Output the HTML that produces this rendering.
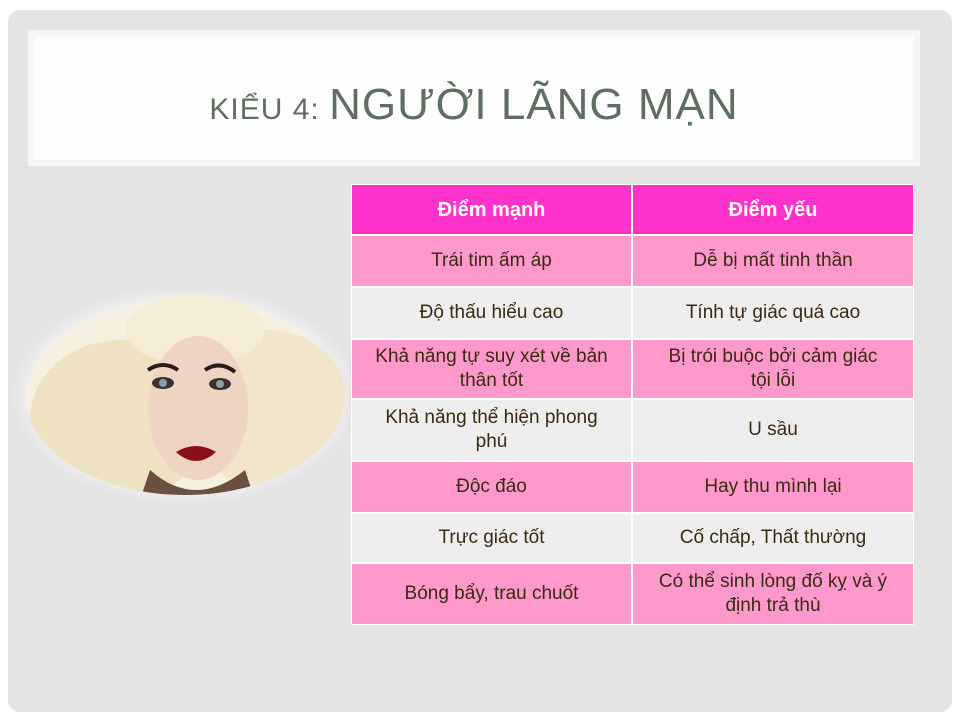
<!DOCTYPE html>
<html><head><meta charset="utf-8">
<style>
*{margin:0;padding:0;box-sizing:border-box}
body{width:960px;height:720px;background:#fff;position:relative;overflow:hidden;font-family:"Liberation Sans",sans-serif}
.slide{position:absolute;left:8px;top:10px;width:944px;height:702px;background:#e4e4e4;border-radius:12px}
.title{position:absolute;left:28px;top:30px;width:892px;height:136px;background:#fdfdfd;border:6px solid #f6f6f6}
.title h1{position:absolute;left:0;right:0;top:44px;text-align:center;font-weight:normal;color:#5e6e60;letter-spacing:1px}
.t-small{font-size:30px}.t-big{font-size:44px}
.row{position:absolute;left:352px;width:561px;display:flex}
.cell{display:flex;align-items:center;justify-content:center;text-align:center;font-size:19px;color:#3a2a10;line-height:24px;padding:0 10px}
.c1{width:279px;margin-right:2px}.c2{width:280px}
.h .cell{background:#ff33cc;color:#fff;font-weight:bold;font-size:20px}
.p .cell{background:#ff99cc}
.g .cell{background:#eeeeee}
</style></head><body>
<div class="slide"></div>
<div class="title"><h1><span class="t-small">KIỂU 4: </span><span class="t-big">NGƯỜI LÃNG MẠN</span></h1></div>
<div style="position:absolute;left:351px;top:184px;width:563px;height:441px;background:#fff"></div>
<div class="row h" style="top:185px;height:49px"><div class="cell c1">Điểm mạnh</div><div class="cell c2">Điểm yếu</div></div>
<div class="row p" style="top:236px;height:50px"><div class="cell c1">Trái tim ấm áp</div><div class="cell c2">Dễ bị mất tinh thần</div></div>
<div class="row g" style="top:288px;height:50px"><div class="cell c1">Độ thấu hiểu cao</div><div class="cell c2">Tính tự giác quá cao</div></div>
<div class="row p" style="top:340px;height:58px"><div class="cell c1">Khả năng tự suy xét về bản<br>thân tốt</div><div class="cell c2">Bị trói buộc bởi cảm giác<br>tội lỗi</div></div>
<div class="row g" style="top:400px;height:60px"><div class="cell c1">Khả năng thể hiện phong<br>phú</div><div class="cell c2">U sầu</div></div>
<div class="row p" style="top:462px;height:50px"><div class="cell c1">Độc đáo</div><div class="cell c2">Hay thu mình lại</div></div>
<div class="row g" style="top:514px;height:48px"><div class="cell c1">Trực giác tốt</div><div class="cell c2">Cố chấp, Thất thường</div></div>
<div class="row p" style="top:564px;height:60px"><div class="cell c1">Bóng bẩy, trau chuốt</div><div class="cell c2">Có thể sinh lòng đố kỵ và ý<br>định trả thù</div></div>
<svg style="position:absolute;left:0;top:290px" width="350" height="220" viewBox="0 290 350 220">
<defs>
<radialGradient id="glow" cx="50%" cy="50%" r="50%"><stop offset="70%" stop-color="#fff"/><stop offset="100%" stop-color="#fff" stop-opacity="0"/></radialGradient>
<clipPath id="cl"><ellipse cx="185" cy="395" rx="160" ry="100"/></clipPath>
</defs>
<ellipse cx="185" cy="395" rx="175" ry="110" fill="url(#glow)"/>
<g clip-path="url(#cl)">
<ellipse cx="185" cy="400" rx="160" ry="100" fill="#f6f0e0"/>
<ellipse cx="120" cy="420" rx="90" ry="80" fill="#efe2c2"/>
<ellipse cx="270" cy="410" rx="80" ry="80" fill="#f1e6cc"/>
<ellipse cx="195" cy="330" rx="70" ry="35" fill="#f5ecd6"/>
<ellipse cx="198" cy="408" rx="50" ry="72" fill="#efd4c4"/>
<path d="M148 370 q15 -10 30 0" stroke="#2a1a18" stroke-width="4" fill="none"/>
<path d="M205 370 q15 -10 30 2" stroke="#2a1a18" stroke-width="4" fill="none"/>
<ellipse cx="163" cy="383" rx="11" ry="6" fill="#3a3030"/>
<ellipse cx="220" cy="384" rx="11" ry="6" fill="#3a3030"/>
<ellipse cx="163" cy="383" rx="4" ry="4" fill="#8aa0a0"/>
<ellipse cx="220" cy="384" rx="4" ry="4" fill="#8aa0a0"/>
<path d="M176 452 q20 -12 40 0 q-20 18 -40 0z" fill="#8a1018"/>
<path d="M150 470 q45 40 95 0 l10 30 h-115z" fill="#6a5040"/>
</g>
</svg>
</body></html>
